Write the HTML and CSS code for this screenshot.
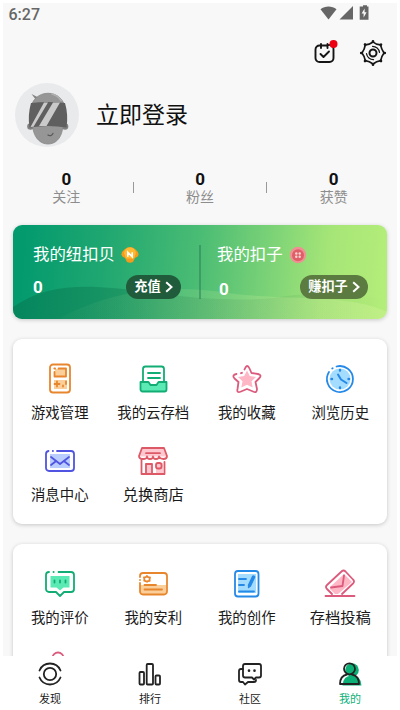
FILE: index.html
```html
<!DOCTYPE html>
<html lang="zh-CN">
<head>
<meta charset="utf-8">
<title>我的</title>
<link rel="stylesheet" href="styles.css">
</head>
<body>
<div class="screen">
  <main class="content">
    <header class="status">
      <span class="time">6:27</span>
      <svg class="status-icons" width="50" height="16" viewBox="0 0 50 16" fill="#666">
        <path d="M0.5 4.2C5 .5 12 .5 16.5 4.2L8.5 14.5Z"/>
        <path d="M33 1V14.500H19.500Z"/>
        <path d="M41 1.500h2V.3h4v1.200h1.500v13.300h-8.800V1.500Z"/>
        <path d="M44.600 3.500l-3 5h2v4l3-5.200h-2Z" fill="#f8f8f8"/>
      </svg>
    </header>

    <div class="tools">
      <svg width="24" height="28" viewBox="0 0 24 28" fill="none" stroke="#151515" stroke-width="1.900" stroke-linecap="round" stroke-linejoin="round">
        <path d="M5.500 6.500h8a4 4 0 0 1 6 4v8.500a4 4 0 0 1-4 4h-10a4 4 0 0 1-4-4v-8.500a4 4 0 0 1 4-4ZM7 5v4M13.500 5v4M6.500 15l3 3 5.500-5.500"/>
        <circle cx="19.500" cy="5" r="4" fill="#ec0012" stroke="none"/>
      </svg>
      <svg width="28" height="28" viewBox="0 0 28 28" fill="none" stroke="#151515" stroke-width="1.700" stroke-linecap="round" stroke-linejoin="round">
        <path d="M14 3Q16.500 5.400 21.500 5.900Q22.300 9.700 25 14Q22.300 17.500 21.700 21.700Q17.500 22.300 14 25Q10.500 22.300 6.300 21.700Q5.700 17.500 3 14Q5.700 10 6.300 5.900Q10.500 5.600 14 3Z"/>
        <circle cx="14" cy="14" r="3.500" stroke-width="2"/>
        <path d="M13.500 7.300a7 7 0 0 1 7 6M14.500 20.700a7 7 0 0 1-7-6" stroke-width="1.200"/>
        <path d="M14 2.200v.6M22 5.500l-.3.400M25.800 14h-.6M22 22l-.3-.3M14 25.800v-.6M6 22l.3-.3M2.200 14h.6M6 5.500l.3.300" stroke-width="2.600"/>
      </svg>
    </div>

    <section class="profile">
      <svg width="64" height="64" viewBox="0 0 64 64">
        <circle cx="32" cy="32" r="32" fill="#e9eaec"/>
        <path d="M21 17l-4.500-6 7 3.500Z" fill="#858585"/>
        <circle cx="15.500" cy="43.500" r="3.300" fill="#808080"/>
        <circle cx="50" cy="43.500" r="3.300" fill="#808080"/>
        <path d="M15.500 29C15.500 4 50.500 4 50.500 29L47.500 46C46 56 40 61 33 61C26 61 20 56 18 46Z" fill="#969696" stroke="#868686" stroke-width=".8"/>
        <path d="M37 11q6 1.500 9 6.500" fill="none" stroke="#b0b0b0" stroke-width="1.800" stroke-linecap="round"/>
        <path d="M16 20q17-2 34 0q3.500 12 1.500 24.500q-18.500-3-37 0q-2-12 1.500-24.500Z" fill="#5f5f5f"/>
        <path d="M29 19.500h4L18.500 43.700l-3 .3ZM38 19.500h7L31.500 43H24Z" fill="#cacaca"/>
        <path d="M33 52q3 2 5-1.500" fill="none" stroke="#555" stroke-width="1.200" stroke-linecap="round"/>
      </svg>
      <h1>立即登录</h1>
    </section>

    <section class="stats">
      <div class="stat"><b>0</b><span>关注</span></div>
      <i></i>
      <div class="stat"><b>0</b><span>粉丝</span></div>
      <i></i>
      <div class="stat"><b>0</b><span>获赞</span></div>
    </section>

    <section class="wallet">
      <svg class="waves" width="374" height="94" viewBox="0 0 374 94">
        <defs>
          <linearGradient id="shade" gradientUnits="userSpaceOnUse" x1="0" y1="0" x2="374" y2="0">
            <stop offset="0" stop-color="#08724c" stop-opacity=".5"/>
            <stop offset=".3" stop-color="#08724c" stop-opacity=".33"/>
            <stop offset=".65" stop-color="#3d8f55" stop-opacity=".2"/>
            <stop offset="1" stop-color="#6fb060" stop-opacity="0"/>
          </linearGradient>
          <linearGradient id="glow" gradientUnits="userSpaceOnUse" x1="45" y1="0" x2="374" y2="0">
            <stop offset="0" stop-color="#d8f4a0" stop-opacity=".02"/>
            <stop offset="1" stop-color="#d8f4a0" stop-opacity=".32"/>
          </linearGradient>
        </defs>
        <path d="M0 82C38 56 80 60 135 67Q210 78 260 73Q310 64 374 74V94H0Z" fill="url(#shade)"/>
        <path d="M45 94C105 62 160 60 215 68S335 68 374 87V94Z" fill="url(#glow)"/>
      </svg>
      <div class="purse">
        <div class="purse-name">我的纽扣贝
          <svg width="18" height="18" viewBox="0 0 18 18"><path d="M4 3Q9-1 14 3Q18 6 17.500 9Q17 11 14 12L12 16Q9 17.500 6 16L4 12Q1 11 .5 9Q0 6 4 3Z" fill="#f59a1c"/><path d="M3 7Q4 1.500 9 1.500T15 7L13 12.500H5Z" fill="#ffb932"/><path d="M6.800 10.800V6.200l4.400 4.600V6.200" fill="none" stroke="#fff" stroke-width="1.600"/></svg>
        </div>
        <div class="purse-row"><b>0</b><button>充值<svg width="8" height="12" viewBox="0 0 8 12"><path d="M1.200 1.200L6.500 6L1.200 10.800"/></svg></button></div>
      </div>
      <div class="purse second">
        <div class="purse-name">我的扣子
          <svg width="18" height="18" viewBox="0 0 18 18"><circle cx="9" cy="9" r="8.200" fill="#f09093"/><circle cx="9" cy="9.300" r="6" fill="#df5f68"/><g fill="#ffd5d1"><circle cx="7.300" cy="7.500" r="1.200"/><circle cx="10.700" cy="7.500" r="1.200"/><circle cx="7.300" cy="10.700" r="1.200"/><circle cx="10.700" cy="10.700" r="1.200"/></g></svg>
        </div>
        <div class="purse-row"><b>0</b><button>赚扣子<svg width="8" height="12" viewBox="0 0 8 12"><path d="M1.200 1.200L6.500 6L1.200 10.800"/></svg></button></div>
      </div>
    </section>

    <section class="card">
      <div class="item">
        <svg class="ico orange" viewBox="0 0 32 32"><rect x="6" y="1.500" width="20" height="28" rx="3"/><path class="tint" d="M10 17h13v9H10z"/><path class="tint" d="M11 6h11v7H11z"/><path d="M14.500 5.500H22v8H10.500V9"/><path d="M10.500 21h5M13 18.500v5M22 18.500v2.500M19 22.500v1"/><path d="M10.300 5.500h.8"/></svg>
        <span>游戏管理</span>
      </div>
      <div class="item">
        <svg class="ico green" viewBox="0 0 32 32"><path d="M6 18V6a2.500 2.500 0 0 1 2.500-2.500h16A2.500 2.500 0 0 1 27 6v12"/><path d="M11 10h12M11 15h12"/><path class="fill" d="M3.500 19h8l2 3h6l2-3h8v7.500a2 2 0 0 1-2 2h-22a2 2 0 0 1-2-2Z"/></svg>
        <span>我的云存档</span>
      </div>
      <div class="item">
        <svg class="ico pink" viewBox="0 0 32 32"><path class="tint" d="M16 7.500l2.800 5.500 6.200.9-4.500 4.400 1.200 6.200L16 21.800 10.300 24.500l1.200-6.200L7 13.900l6.200-.9Z"/><path d="M13.500 6.500Q16 0 18.500 5.500L20.500 10 27 11Q31.500 12 28 15.500L24.500 19 26 26Q26 30.500 22 28.500L16 26 10 28.500Q5.500 30.500 6.500 26L7.500 19 3.500 15.500Q.5 12 5.500 11"/><path d="M10 10.200l1-.4"/></svg>
        <span>我的收藏</span>
      </div>
      <div class="item">
        <svg class="ico blue" viewBox="0 0 32 32"><circle class="tint" cx="16" cy="16" r="10.500"/><path d="M12.500 3.500A13 13 0 1 1 5 9M8.200 5.500l.5-.3"/><path d="M14 11.500l3 5 5.500 3.500" stroke-width="2"/><path d="M16 7v.5M16 24.500v.5M7.500 16H8M24.500 16h.5" stroke-width="2.400"/></svg>
        <span>浏览历史</span>
      </div>
      <div class="item">
        <svg class="ico violet" viewBox="0 0 32 32"><path class="tint" d="M6 9h20v14H6z"/><path d="M13 6h14a3 3 0 0 1 3 3v14a3 3 0 0 1-3 3H5a3 3 0 0 1-3-3V9a3 3 0 0 1 2.500-3M8.800 6h.2"/><path d="M7 12l9 7 9-7M7 20l4.500-3.500M25 20l-4.500-3.500"/></svg>
        <span>消息中心</span>
      </div>
      <div class="item">
        <svg class="ico rose" viewBox="0 0 32 32"><path class="tint" d="M5 3.500h22l3 8H2Z"/><path class="tint" d="M8 18h6v11H8zM19 18h7v11h-7z"/><path d="M5 3h22l3 8q0 3-3.500 3T22 11.500Q22 14 19 14t-3-2.500Q16 14 13 14t-3-2.500Q10 14 6 14t-4-3Z"/><path d="M4.500 15v14h23V17M9 29V19h6v10M9 8.200h14"/><rect x="19" y="18" width="5.500" height="5.500" rx="2"/></svg>
        <span class="large">兑换商店</span>
      </div>
    </section>

    <section class="card">
      <div class="item">
        <svg class="ico green" viewBox="0 0 32 32"><path class="fill nostroke" d="M6.500 8h19v11.500h-6L16 22.500l-3.500-3h-6z"/><path d="M14.500 4H27a3 3 0 0 1 3 3v14a3 3 0 0 1-3 3h-7l-4 4-4-4H5a3 3 0 0 1-3-3V7a3 3 0 0 1 3-3M9.500 4h.2"/><path d="M10.500 12.500v2M16 12.500v2M21.500 12.500v2"/></svg>
        <span>我的评价</span>
      </div>
      <div class="item">
        <svg class="ico orange" viewBox="0 0 32 32"><path class="tint" d="M3 17h26v8q0 2-2 2H5q-2 0-2-2Z"/><path d="M3 9V8a3 3 0 0 1 3-3h21a3 3 0 0 1 3 3v15.500a3 3 0 0 1-3 3H6a3 3 0 0 1-3-3V15M3 12v.1M7.500 17H19M7.500 21.500H25"/><path d="M10 8l1 1.200 2 .1-.5 1.900.2 1.600-1.700.3-1 .7-1.300-.7-1.500-.4.200-1.700-.5-1.700 1.900-.2Z"/></svg>
        <span>我的安利</span>
      </div>
      <div class="item">
        <svg class="ico blue" viewBox="0 0 32 32"><path class="tint" d="M7 6h18v19H7z"/><rect x="4" y="3" width="23.500" height="25.500" rx="3"/><path d="M8 11h7M8 17h5M8 23.500h15"/><path d="M22.500 9l-4 8.500" stroke-width="3.500"/><path d="M18 18.500l-.3.800"/></svg>
        <span>我的创作</span>
      </div>
      <div class="item">
        <svg class="ico pink" viewBox="0 0 32 32"><path class="tint" d="M6 19L20 6l8 8L14 26h-3l-5-5Z"/><path d="M8 26l-5-5q-2-2 0-4L17.500 3.500q2-2 4 0l7.500 8q2 2 0 4L18 26M1.500 28h29"/><path d="M20 7.500l-1.500 10.500L7 19.500"/></svg>
        <span class="large">存档投稿</span>
      </div>
      <div class="item">
        <svg class="ico pink" viewBox="0 0 32 32"><circle cx="14" cy="8" r="5.500"/><path d="M3 29q0-12 11-12t11 12Z"/></svg>
      </div>
    </section>
  </main>

  <nav class="tabs">
    <a>
      <svg width="26" height="26" viewBox="0 0 26 26"><circle cx="13" cy="13" r="6.200"/><path d="M2.500 9.500Q5.500 2.500 13 2.500T23.500 9.500M2.500 16.500Q5.500 23.500 13 23.500T23.500 16.500"/></svg>
      <span>发现</span>
    </a>
    <a>
      <svg width="26" height="26" viewBox="0 0 26 26"><rect x="2.500" y="11" width="4.500" height="12.500" rx="1"/><rect x="9.700" y="3" width="6.300" height="20.500" rx="1"/><rect x="18.500" y="14.500" width="4.500" height="9" rx="1"/></svg>
      <span>排行</span>
    </a>
    <a>
      <svg width="26" height="26" viewBox="0 0 26 26"><path d="M6 8H4Q2 8 2 10v9q0 2 2 2h2l2 2.500 3-2.500h6q2 0 2-2"/><path d="M8 3h14q2 0 2 2v9.500q0 2-2 2h-3L17 18.500l-2-2H8q-2 0-2-2V5q0-2 2-2Z"/><path d="M12 9.500v.2M17.500 9.500v.2" stroke-width="2.600"/></svg>
      <span>社区</span>
    </a>
    <a class="active">
      <svg width="26" height="26" viewBox="0 0 26 26"><g fill="#0bb077" stroke="none"><circle cx="15" cy="9" r="6.800"/><path d="M5.500 24.500Q6 14.500 15 14.500T24.500 24.500Z"/></g><circle cx="12.500" cy="7.800" r="5.500"/><path d="M10 13.500Q3 15 3 23h19q0-8-7-9.500"/></svg>
      <span>我的</span>
    </a>
  </nav>
</div>
</body>
</html>
```
FILE: styles.css
```css
* { box-sizing: border-box; }

body {
  margin: 0;
  background: #fff;
  color: #1a1a1a;
  font-family: Roboto, "Noto Sans CJK SC", sans-serif;
}

.screen {
  display: flex;
  flex-direction: column;
  width: 400px;
  height: 710px;
  overflow: hidden;
}

.content {
  flex: none;
  height: 653px;
  margin: 3px 3px 0;
  padding: 0 10px;
  background: #f8f8f8;
  overflow: hidden;
}

svg { display: block; flex: none; }

.status {
  display: flex;
  justify-content: space-between;
  height: 22px;
  margin: 0 17px 0 -4.500px;
  color: #666;
}
.time { font-size: 16px; font-weight: 500; line-height: 23px; }
.status-icons { margin-top: 2px; }

.tools {
  display: flex;
  justify-content: flex-end;
  gap: 21px;
  height: 28px;
  margin-top: 14px;
}

.profile {
  display: flex;
  align-items: center;
  gap: 17px;
  height: 64px;
  margin: 16px 0 0 2px;
}
.profile h1 {
  margin: 2px 0 0;
  font-size: 23px;
  line-height: 32px;
  font-weight: 400;
  color: #111;
}

.stats {
  display: flex;
  align-items: center;
  height: 40px;
  margin: 20px -13px 0;
}
.stat {
  flex: 1;
  display: flex;
  flex-direction: column;
  align-items: center;
}
.stat b { font-size: 17px; line-height: 20px; color: #111; }
.stat span { margin-top: -1px; font-size: 14px; line-height: 18px; color: #8d8d8d; }
.stats i { width: 1px; height: 11px; background: #999; }

.wallet {
  position: relative;
  display: flex;
  height: 94px;
  margin-top: 18px;
  border-radius: 9px;
  overflow: hidden;
  color: #fff;
  background: linear-gradient(95deg, #039a6e 3%, #22a871 26%, #4cbd74 50%, #81d577 70%, #a5e577 83%, #b5ee7a);
  box-shadow: 0 1px 4px #0003;
}
.waves { position: absolute; left: 0; top: 0; }
.purse {
  position: relative;
  width: 188px;
  padding: 19px 20px 0 20px;
}
.purse:not(.second)::after {
  content: "";
  position: absolute;
  right: 0;
  top: 20px;
  width: 2px;
  height: 54px;
  background: #2a7b5580;
}
.second { width: 186px; padding: 19px 19px 0 16px; }
.purse-name {
  display: flex;
  align-items: center;
  gap: 6px;
  height: 22px;
  font-size: 16.400px;
  line-height: 22px;
}
.purse-row {
  display: flex;
  align-items: center;
  justify-content: space-between;
  height: 24px;
  margin-top: 9px;
}
.purse-row b { font-size: 17px; }
.second .purse-row b { margin: 4px 0 0 2px; }
button {
  display: flex;
  align-items: center;
  justify-content: center;
  gap: 4px;
  width: 55px;
  height: 24px;
  padding: 0;
  border: 0;
  border-radius: 12px;
  background: #205c3b;
  color: #fff;
  font: bold 13.200px/20px Roboto, "Noto Sans CJK SC", sans-serif;
}
.second button { width: 68px; background: #5b7b40; }
button path { fill: none; stroke: #fff; stroke-width: 2; }

.card {
  display: grid;
  grid-template-columns: repeat(4, 1fr);
  grid-auto-rows: 82px;
  height: 185px;
  margin-top: 20px;
  padding-top: 24px;
  border-radius: 9px;
  background: #fff;
  box-shadow: 0 1px 4px #0003;
}
.item {
  display: flex;
  flex-direction: column;
  align-items: center;
}
.item span {
  margin-top: 9px;
  font-size: 14.400px;
  line-height: 20px;
  white-space: nowrap;
}
.item .large { margin-top: 8px; font-size: 15.300px; }

.ico {
  width: 32px;
  height: 32px;
  fill: none;
  stroke-width: 1.800;
  stroke-linecap: round;
  stroke-linejoin: round;
}
.ico .tint, .ico .nostroke { stroke: none; }
.orange { stroke: #e8862e; }
.orange .tint { fill: #fbcf99; }
.green { stroke: #12ad74; }
.green .fill { fill: #5be9b4; }
.pink { stroke: #dc5b7d; }
.pink .tint { fill: #ffb6c5; }
.blue { stroke: #2589e8; }
.blue .tint { fill: #a4dcff; }
.violet { stroke: #5054e0; }
.violet .tint { fill: #b9ceff; }
.rose { stroke: #dd5966; }
.rose .tint { fill: #ffc8d0; }

.tabs {
  display: flex;
  height: 54px;
  background: #fff;
}
.tabs a {
  flex: 1;
  display: flex;
  flex-direction: column;
  align-items: center;
  padding-top: 5px;
}
.tabs svg {
  fill: none;
  stroke: #222;
  stroke-width: 1.800;
  stroke-linecap: round;
  stroke-linejoin: round;
}
.tabs span { margin-top: 5px; font-size: 11px; line-height: 16px; }
.tabs .active span { color: #0bb077; }
```
